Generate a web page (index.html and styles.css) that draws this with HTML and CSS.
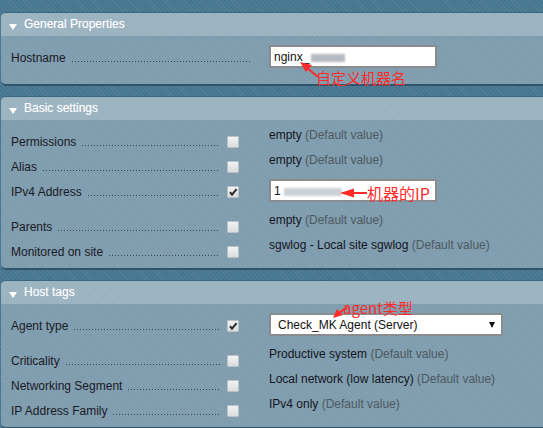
FILE: index.html
```html
<!DOCTYPE html>
<html>
<head>
<meta charset="utf-8">
<link rel="stylesheet" href="styles.css">
</head>
<body>
<div class="page">
  <section class="box">
    <div class="head"><span class="tri"></span>General Properties</div>
    <div class="body">
      <div class="row">
        <div class="legend wide"><span class="lbl">Hostname</span><span class="dots"></span></div>
        <div class="val"><div class="textbox">nginx_<span class="blur b1"></span></div></div>
      </div>
    </div>
  </section>

  <section class="box">
    <div class="head"><span class="tri"></span>Basic settings</div>
    <div class="body">
      <div class="row">
        <div class="legend"><span class="lbl">Permissions</span><span class="dots"></span><span class="cb"></span></div>
        <div class="val"><span class="txt">empty</span> <span class="def">(Default value)</span></div>
      </div>
      <div class="row">
        <div class="legend"><span class="lbl">Alias</span><span class="dots"></span><span class="cb"></span></div>
        <div class="val"><span class="txt">empty</span> <span class="def">(Default value)</span></div>
      </div>
      <div class="row">
        <div class="legend"><span class="lbl">IPv4 Address</span><span class="dots"></span><span class="cb on"><svg viewBox="0 0 12 12" width="12" height="12"><path d="M3 6.2 L5 8.6 L9.6 3.2" fill="none" stroke="#2b2b2b" stroke-width="2"/></svg></span></div>
        <div class="val"><div class="textbox">1<span class="blur b2"></span></div></div>
      </div>
      <div class="row">
        <div class="legend"><span class="lbl">Parents</span><span class="dots"></span><span class="cb"></span></div>
        <div class="val"><span class="txt">empty</span> <span class="def">(Default value)</span></div>
      </div>
      <div class="row">
        <div class="legend"><span class="lbl">Monitored on site</span><span class="dots"></span><span class="cb"></span></div>
        <div class="val"><span class="txt">sgwlog - Local site sgwlog</span> <span class="def">(Default value)</span></div>
      </div>
    </div>
  </section>

  <section class="box">
    <div class="head"><span class="tri"></span>Host tags</div>
    <div class="body">
      <div class="row">
        <div class="legend"><span class="lbl">Agent type</span><span class="dots"></span><span class="cb on"><svg viewBox="0 0 12 12" width="12" height="12"><path d="M3 6.2 L5 8.6 L9.6 3.2" fill="none" stroke="#2b2b2b" stroke-width="2"/></svg></span></div>
        <div class="val"><div class="select"><span>Check_MK Agent (Server)</span><span class="arrow"></span></div></div>
      </div>
      <div class="row">
        <div class="legend"><span class="lbl">Criticality</span><span class="dots"></span><span class="cb"></span></div>
        <div class="val"><span class="txt">Productive system</span> <span class="def">(Default value)</span></div>
      </div>
      <div class="row">
        <div class="legend"><span class="lbl">Networking Segment</span><span class="dots"></span><span class="cb"></span></div>
        <div class="val"><span class="txt">Local network (low latency)</span> <span class="def">(Default value)</span></div>
      </div>
      <div class="row">
        <div class="legend"><span class="lbl">IP Address Family</span><span class="dots"></span><span class="cb"></span></div>
        <div class="val"><span class="txt">IPv4 only</span> <span class="def">(Default value)</span></div>
      </div>
    </div>
  </section>

  <div class="note n1">自定义机器名</div>
  <svg class="arr a1" width="26" height="24" viewBox="0 0 26 24">
    <line x1="22" y1="19" x2="10" y2="9" stroke="#ff2b2b" stroke-width="2"/>
    <polygon points="4,4 16,7 10,14" fill="#ff2b2b"/>
  </svg>

  <div class="note n2">机器的IP</div>
  <svg class="arr a2" width="30" height="12" viewBox="0 0 30 12">
    <line x1="28" y1="6" x2="10" y2="6" stroke="#ff2b2b" stroke-width="2"/>
    <polygon points="1,6 15,1.5 15,10.5" fill="#ff2b2b"/>
  </svg>

  <div class="note n3">agent类型</div>
  <svg class="arr a3" width="18" height="16" viewBox="0 0 18 16">
    <line x1="16" y1="3" x2="8" y2="9" stroke="#ff2b2b" stroke-width="2"/>
    <polygon points="2,14 6,5 12,11" fill="#ff2b2b"/>
  </svg>
</div>
</body>
</html>
```

FILE: styles.css
```css
html, body {
  margin: 0;
  padding: 0;
}
body {
  width: 543px;
  height: 428px;
  overflow: hidden;
  background-color: #477690;
  background-image: repeating-linear-gradient(45deg, rgba(255,255,255,0.06) 0 1px, rgba(0,0,0,0) 1px 3px);
  font-family: "Liberation Sans", Arial, sans-serif;
  font-size: 12px;
}
.page {
  position: relative;
  padding: 12px 0 0 1px;
}
.box {
  margin: 0 -12px 10px 0;
  border-top: 1px solid #3a667e;
  border-bottom: 2px solid #2d566c;
  border-radius: 5px 0 0 5px;
  overflow: hidden;
  background-color: #7f9dae;
}
.head {
  height: 23px;
  line-height: 23px;
  background-color: #9bb3c1;
  background-image: repeating-linear-gradient(45deg, rgba(255,255,255,0.05) 0 1px, rgba(0,0,0,0) 1px 3px);
  color: #ffffff;
  font-size: 12px;
  padding-left: 8px;
  display: flex;
  align-items: center;
  text-shadow: 0 0 1px rgba(255,255,255,0.4);
}
.tri {
  width: 0;
  height: 0;
  border-left: 4px solid transparent;
  border-right: 4px solid transparent;
  border-top: 6px solid #ffffff;
  margin: 4px 7px 0 0;
}
.body {
  padding: 5px 0 8px 0;
  background-image: repeating-linear-gradient(45deg, rgba(255,255,255,0.04) 0 1px, rgba(0,0,0,0) 1px 3px);
}
.row {
  display: flex;
  align-items: flex-start;
}
.legend {
  width: 268px;
  box-sizing: border-box;
  padding: 10px 30px 0 10px;
  display: flex;
  align-items: flex-end;
  line-height: 14px;
}
.legend.wide {
  padding-right: 19px;
}
.lbl {
  color: #1a1a26;
  white-space: nowrap;
}
.dots {
  flex: 1;
  height: 1px;
  margin: 0 0 3px 6px;
  background-image: linear-gradient(to right, #3b4650 1px, transparent 1px);
  background-size: 3px 1px;
  background-repeat: repeat-x;
}
.cb {
  width: 12px;
  height: 12px;
  box-sizing: border-box;
  margin-left: 7px;
  align-self: center;
  background: linear-gradient(#f2f2f2, #dcdcdc);
  border: 1px solid #b9c2c8;
  border-radius: 1px;
  position: relative;
}
.cb svg {
  position: absolute;
  left: -1px;
  top: -1px;
}
.val {
  padding: 3px 0 8px 0;
  line-height: 14px;
  white-space: nowrap;
}
.txt {
  color: #15151f;
}
.def {
  color: #4e5961;
}
.textbox {
  margin-top: 1px;
  width: 168px;
  height: 23px;
  box-sizing: border-box;
  border: 2px solid #8a8d90;
  background: #ffffff;
  padding: 0 3px;
  display: flex;
  align-items: center;
  color: #111;
}
.blur {
  display: inline-block;
  height: 8px;
  background: #b4babf;
  filter: blur(1px);
  margin-top: 2px;
}
.b1 {
  width: 34px;
  margin-left: 2px;
}
.b2 {
  width: 58px;
  margin-left: 3px;
  background: #cdd2d6;
}
.select {
  margin-top: 1px;
  width: 234px;
  height: 23px;
  box-sizing: border-box;
  border: 2px solid #8a8d90;
  background: #ffffff;
  padding: 0 6px 0 7px;
  display: flex;
  align-items: center;
  justify-content: space-between;
  color: #111;
}
.arrow {
  width: 0;
  height: 0;
  border-left: 3.5px solid transparent;
  border-right: 3.5px solid transparent;
  border-top: 6px solid #111;
}
.note {
  position: absolute;
  color: #ff2b2b;
  font-family: "Noto Sans CJK SC", sans-serif;
  line-height: 16px;
  white-space: nowrap;
}
.n1 {
  left: 316px;
  top: 70px;
  font-size: 15px;
}
.n2 {
  left: 367px;
  top: 185px;
  font-size: 16px;
}
.n3 {
  left: 343px;
  top: 300px;
  font-size: 15px;
}
.arr {
  position: absolute;
}
.a1 {
  left: 296px;
  top: 58px;
}
.a2 {
  left: 339px;
  top: 187px;
}
.a3 {
  left: 331px;
  top: 304px;
}
```
